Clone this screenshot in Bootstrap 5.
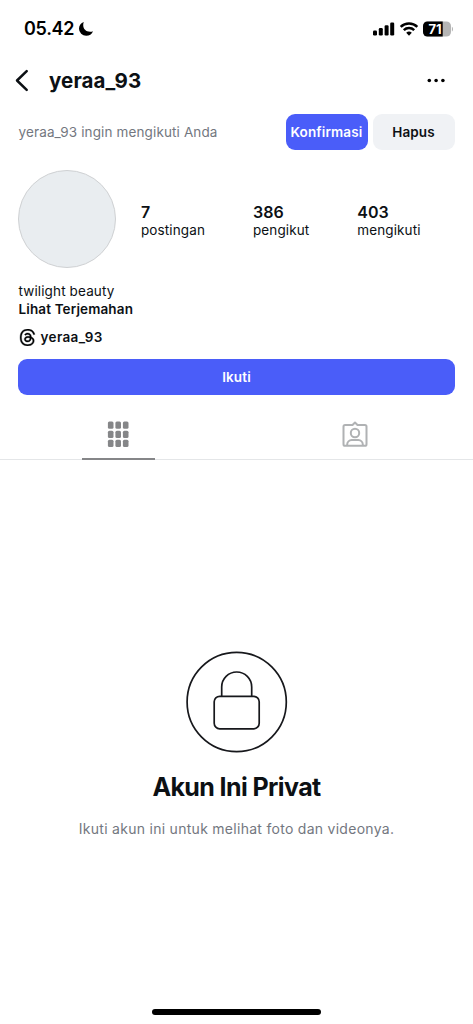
<!DOCTYPE html>
<html lang="id">
<head>
<meta charset="utf-8">
<meta name="viewport" content="width=device-width, initial-scale=1">
<title>yeraa_93</title>
<link href="https://cdn.jsdelivr.net/npm/bootstrap@5.3.0/dist/css/bootstrap.min.css" rel="stylesheet">
<style>
  body { font-family: Inter, "Liberation Sans", sans-serif; color: #0c1014; background: #fff; font-size: 13.5px; line-height: 18px; letter-spacing: .13px; }
  svg { display: block; flex: none; }
  .screen { height: 1024px; overflow: hidden; }
  .status-bar { height: 56px; padding: 1px 20px 0 24px; color: #000; }
  .clock { font-size: 18px; font-weight: 600; letter-spacing: -.3px; margin-top: 1px; }
  .top-bar { height: 48px; padding: 1px 27px 0 14px; }
  .username { font-size: 20.5px; line-height: 26px; font-weight: 650; letter-spacing: .1px; margin-left: 19px; }
  .request { height: 56px; padding: 0 18.5px; }
  .request-actions { gap: 5px; }
  .muted { color: #737780; }
  .btn-ig { border: 0; border-radius: 9px; height: 36px; padding: 0; font-size: 13.5px; line-height: 36px; font-weight: 600; letter-spacing: .13px; }
  .btn-blue, .btn-blue:hover { background: #4a5df9; color: #fff; }
  .btn-grey, .btn-grey:hover { background: #f0f2f5; color: #0c1014; }
  .w-request { width: 82px; }
  .profile { height: 120px; padding: 10px 18.4px 0; }
  .avatar { width: 98px; height: 98px; background: #e9edf0; border: 1px solid #cfd1d3; margin-right: 24.5px; flex: none; }
  .stats { display: grid; grid-template-columns: 112px 104.3px auto; padding-top: 33px; }
  .stat-value { font-size: 16px; font-weight: 600; letter-spacing: .1px; }
  .bio { padding: 2px 18.5px 0; height: 79px; }
  .bio .threads { margin-top: 9px; gap: 5px; height: 20px; letter-spacing: .35px; }
  .follow { margin: 0 18.4px; }
  .tabs { height: 65px; border-bottom: 1px solid #e4e6e8; }
  .tab-on { position: relative; }
  .tab-on::after { content: ""; position: absolute; left: 50%; bottom: -1px; width: 73px; height: 2.5px; margin-left: -36.5px; background: #858688; }
  .private { padding-top: 191px; }
  .private-title { font-size: 25px; line-height: 32px; font-weight: 700; letter-spacing: -.6px; margin: 18px 0 0; }
  .private-text { margin: 17px 0 0; font-size: 14px; letter-spacing: .28px; }
  .home-bar { width: 169px; height: 6px; background: #000; margin-bottom: 9px; }
</style>
</head>
<body>
<div class="screen d-flex flex-column">
  <header>
    <div class="status-bar d-flex align-items-center">
      <span class="clock">05.42</span>
      <svg class="ms-1" width="16" height="16" viewBox="0 0 16 16"><path fill="#000" d="M5.800 1C2.900 2 1 4.600 1 7.700a7.200 7.200 0 0 0 7.200 7.100c3.100 0 5.700-1.700 6.800-4.600-.8.400-1.900.6-2.900.6-4.100 0-6.900-2.700-6.900-6.700 0-1.100.2-2.200.6-3.100z"/></svg>
      <div class="ms-auto d-flex align-items-center">
        <svg width="22" height="14" viewBox="0 0 22 14"><rect x="0" y="8.500" width="4" height="5" rx="1.200"/><rect x="5.800" y="6" width="4" height="7.500" rx="1.200"/><rect x="11.600" y="3.200" width="4" height="10.300" rx="1.200"/><rect x="17.200" y=".5" width="4" height="13" rx="1.200"/></svg>
        <svg class="ms-1" width="20" height="14" viewBox="0 0 20 14"><g fill="none" stroke="#000" stroke-width="2.500"><path d="M1.700 4.900a12 12 0 0 1 16.600 0"/><path d="M4.800 8.200a7.500 7.500 0 0 1 10.400 0"/></g><path d="M10 13.700 7.200 10.800a4 4 0 0 1 5.600 0z"/></svg>
        <svg class="ms-1" width="30" height="16" viewBox="0 0 30 16"><defs><clipPath id="cell"><rect x="0" y=".5" width="28" height="15" rx="4.500"/></clipPath></defs><g clip-path="url(#cell)"><rect width="32" height="16" fill="#b5b5b5"/><rect width="19.700" height="16"/></g><path d="M28.900 5.700c1.500.6 1.500 4.200 0 4.800z" fill="#b5b5b5"/><text x="5.500" y="12.700" font-family="Inter, sans-serif" font-size="13" font-weight="700" fill="#fff" letter-spacing="0">71</text></svg>
      </div>
    </div>
    <div class="top-bar d-flex align-items-center">
      <svg width="16" height="24" viewBox="0 0 16 24"><path d="M12.700 2.200 3 11.500l9.700 9.300" fill="none" stroke="#0c1014" stroke-width="2.500" stroke-linecap="round" stroke-linejoin="round"/></svg>
      <h1 class="username mb-0">yeraa_93</h1>
      <svg class="ms-auto" width="19" height="6" viewBox="0 0 19 6"><circle cx="2.300" cy="2.500" r="1.800"/><circle cx="9.100" cy="2.500" r="1.800"/><circle cx="15.900" cy="2.500" r="1.800"/></svg>
    </div>
  </header>

  <section class="request d-flex align-items-center">
    <span class="muted">yeraa_93 ingin mengikuti Anda</span>
    <div class="request-actions ms-auto d-flex">
      <button class="btn btn-ig btn-blue w-request">Konfirmasi</button>
      <button class="btn btn-ig btn-grey w-request">Hapus</button>
    </div>
  </section>

  <section class="profile d-flex">
    <div class="avatar rounded-circle"></div>
    <div class="stats align-self-start">
      <div><div class="stat-value">7</div>postingan</div>
      <div><div class="stat-value">386</div>pengikut</div>
      <div><div class="stat-value">403</div>mengikuti</div>
    </div>
  </section>

  <section class="bio">
    <div>twilight beauty</div>
    <div class="fw-semibold">Lihat Terjemahan</div>
    <div class="threads d-flex align-items-center fw-semibold">
      <svg width="17" height="17" viewBox="0 0 24 24"><path stroke="#0c1014" stroke-width=".5" d="M12.186 24h-.007c-3.581-.024-6.334-1.205-8.184-3.509C2.350 18.440 1.500 15.586 1.472 12.010v-.017c.03-3.579.879-6.430 2.525-8.482C5.845 1.205 8.600.024 12.180 0h.014c2.746.02 5.043.725 6.826 2.098 1.677 1.290 2.858 3.130 3.509 5.467l-2.040.569c-1.104-3.960-3.898-5.984-8.304-6.015-2.910.022-5.110.936-6.540 2.717C4.307 6.504 3.616 8.914 3.589 12c.027 3.086.718 5.496 2.057 7.164 1.430 1.783 3.631 2.698 6.540 2.717 2.623-.02 4.358-.631 5.800-2.045 1.647-1.613 1.618-3.593 1.090-4.798-.31-.71-.873-1.300-1.634-1.750-.192 1.352-.622 2.446-1.284 3.272-.886 1.102-2.140 1.704-3.730 1.790-1.202.065-2.361-.218-3.259-.801-1.063-.689-1.685-1.740-1.752-2.964-.065-1.190.408-2.285 1.330-3.082.88-.76 2.119-1.207 3.583-1.291a13.853 13.853 0 0 1 3.020.142c-.126-.742-.375-1.332-.75-1.757-.513-.586-1.308-.883-2.359-.89h-.029c-.844 0-1.992.232-2.721 1.320L7.734 7.847c.98-1.454 2.568-2.256 4.478-2.256h.044c3.194.02 5.097 1.975 5.287 5.388.108.046.216.094.321.142 1.490.7 2.580 1.761 3.154 3.070.797 1.820.871 4.790-1.548 7.158-1.850 1.810-4.094 2.628-7.277 2.650Zm1.003-11.690c-.242 0-.487.007-.739.021-1.836.103-2.980.946-2.916 2.143.067 1.256 1.452 1.839 2.784 1.767 1.224-.065 2.818-.543 3.086-3.710a10.500 10.500 0 0 0-2.215-.221z"/></svg>
      <span>yeraa_93</span>
    </div>
  </section>

  <button class="follow btn btn-ig btn-blue">Ikuti</button>

  <nav class="tabs d-flex">
    <div class="tab-on flex-fill w-50 d-flex justify-content-center pt-4">
      <svg width="22" height="28" viewBox="0 0 22 28"><g fill="#858688"><rect x=".9" y="2.500" width="5.600" height="7.200" rx="1.500"/><rect x="8.400" y="2.500" width="5.600" height="7.200" rx="1.500"/><rect x="15.900" y="2.500" width="5.600" height="7.200" rx="1.500"/><rect x=".9" y="11.700" width="5.600" height="7.200" rx="1.500"/><rect x="8.400" y="11.700" width="5.600" height="7.200" rx="1.500"/><rect x="15.900" y="11.700" width="5.600" height="7.200" rx="1.500"/><rect x=".9" y="20.700" width="5.600" height="7.200" rx="1.500"/><rect x="8.400" y="20.700" width="5.600" height="7.200" rx="1.500"/><rect x="15.900" y="20.700" width="5.600" height="7.200" rx="1.500"/></g></svg>
    </div>
    <div class="flex-fill w-50 d-flex justify-content-center pt-4">
      <svg width="26" height="28" viewBox="0 0 26 28"><g fill="none" stroke="#b0b2b4" stroke-width="2" stroke-linejoin="round"><path d="M3.100 6h7.400L13 3.500 15.500 6h7.400a1.600 1.600 0 0 1 1.600 1.600v17.600a1.600 1.600 0 0 1-1.600 1.600H3.100a1.600 1.600 0 0 1-1.600-1.600V7.600A1.600 1.600 0 0 1 3.100 6z"/><circle cx="13" cy="14" r="4.200"/><path d="M5.200 26.500v-.9c0-2.500 2-4.500 4.500-4.500h6.600c2.500 0 4.500 2 4.500 4.500v.9"/></g></svg>
    </div>
  </nav>

  <main class="private flex-fill d-flex flex-column align-items-center text-center">
    <svg width="102" height="102" viewBox="0 0 102 102"><g fill="none" stroke="#17181c" stroke-width="1.700"><circle cx="50.700" cy="51" r="49.600"/><rect x="28.200" y="45.300" width="45" height="32.500" rx="5.500"/><path d="M35.700 45.300V36a15 15 0 0 1 30 0v9.300"/></g></svg>
    <h2 class="private-title">Akun Ini Privat</h2>
    <p class="private-text muted">Ikuti akun ini untuk melihat foto dan videonya.</p>
  </main>

  <div class="home-bar rounded-pill mx-auto"></div>
</div>
<script src="https://cdn.jsdelivr.net/npm/bootstrap@5.3.0/dist/js/bootstrap.bundle.min.js"></script>
</body>
</html>
